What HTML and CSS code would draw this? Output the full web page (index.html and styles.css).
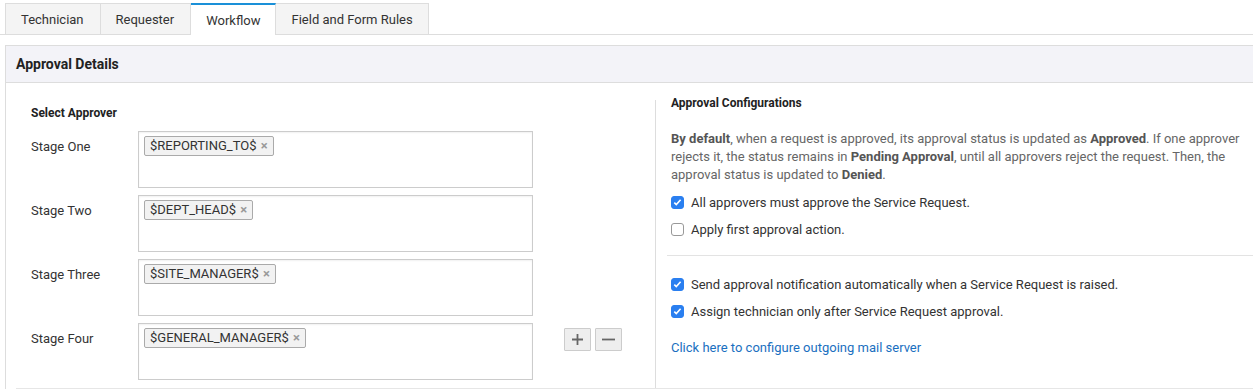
FILE: index.html
```html
<!DOCTYPE html>
<html lang="en">
<head>
  <meta charset="UTF-8">
  <title>Workflow - Approval Details</title>
  <link rel="stylesheet" href="styles.css">
</head>
<body>
  <div class="tabs">
    <div class="tab wide">Technician</div>
    <div class="tab wide">Requester</div>
    <div class="tab active">Workflow</div>
    <div class="tab">Field and Form Rules</div>
  </div>

  <div class="panel">
    <div class="panel-head">Approval Details</div>
    <div class="panel-body">
      <!-- left: approver stages -->
      <div class="approvers">
        <h3>Select Approver</h3>
        <div class="stage">
          <label>Stage One</label>
          <div class="picker"><span class="tag">$REPORTING_TO$ <i>&times;</i></span></div>
        </div>
        <div class="stage">
          <label>Stage Two</label>
          <div class="picker"><span class="tag">$DEPT_HEAD$ <i>&times;</i></span></div>
        </div>
        <div class="stage">
          <label>Stage Three</label>
          <div class="picker"><span class="tag">$SITE_MANAGER$ <i>&times;</i></span></div>
        </div>
        <div class="stage">
          <label>Stage Four</label>
          <div class="picker"><span class="tag">$GENERAL_MANAGER$ <i>&times;</i></span></div>
          <div class="stage-btns">
            <button class="sq">
              <svg width="13" height="13" viewBox="0 0 13 13"><path d="M6.5 1v11M1 6.5h11" stroke="#666" stroke-width="1.8"/></svg>
            </button>
            <button class="sq">
              <svg width="15" height="13" viewBox="0 0 15 13"><path d="M1 6.5h13" stroke="#666" stroke-width="1.8"/></svg>
            </button>
          </div>
        </div>
      </div>

      <!-- right: configuration -->
      <div class="config">
        <h3>Approval Configurations</h3>
        <p class="note"><b>By default</b>, when a request is approved, its approval status is updated as <b>Approved</b>. If one approver rejects it, the status remains in <b>Pending Approval</b>, until all approvers reject the request. Then, the approval status is updated to <b>Denied</b>.</p>
        <div class="opt"><span class="cb on"></span>All approvers must approve the Service Request.</div>
        <div class="opt"><span class="cb"></span>Apply first approval action.</div>
        <hr>
        <div class="opt"><span class="cb on"></span>Send approval notification automatically when a Service Request is raised.</div>
        <div class="opt"><span class="cb on"></span>Assign technician only after Service Request approval.</div>
        <a class="mail-link" href="#">Click here to configure outgoing mail server</a>
      </div>
    </div>
  </div>
</body>
</html>
```

FILE: styles.css
```css
body {
  margin: 0;
  font-family: Roboto, "Liberation Sans", sans-serif;
  font-size: 13px;
  color: #333;
  background: #fff;
  overflow: hidden;
}

/* tabs */
.tabs {
  display: flex;
  margin-top: 3px;
  padding-left: 5px;
  border-bottom: 1px solid #ddd;
  height: 31px;
}

.tab {
  box-sizing: border-box;
  height: 31px;
  padding: 1px 15px 0;
  line-height: 30px;
  font-size: 13px;
  color: #333;
  background: #f4f4f4;
  border: 1px solid #ddd;
  border-bottom: none;
  border-left: none;
}

.tab.wide {
  padding-right: 16px;
}

.tab:first-child {
  border-left: 1px solid #ddd;
}

.tab.active {
  background: #fff;
  border-top: 2px solid #1a90d8;
  height: 32px;
  padding-top: 1px;
  margin-bottom: -1px;
}

/* panel */
.panel {
  margin: 10px 0 0 5px;
  border-left: 1px solid #ddd;
  border-top: 1px solid #ddd;
}

.panel-head {
  height: 36px;
  line-height: 37px;
  padding-left: 10px;
  background: #f3f3f8;
  border-bottom: 1px solid #ddd;
  font-size: 14px;
  font-weight: bold;
  color: #222;
}

.panel-body {
  display: grid;
  grid-template-columns: 639px 1fr;
  margin-left: 10px;
  border-bottom: 1px solid #e6e6e6;
  height: 305px;
}

h3 {
  margin: 0;
  font-size: 12px;
  font-weight: bold;
  color: #222;
}

/* approvers */
.approvers {
  padding: 22px 0 0 15px;
}

.approvers h3 {
  padding-top: 1px;
  margin-bottom: 11px;
}

.stage {
  display: flex;
  align-items: flex-start;
  margin-bottom: 7px;
}

.stage label {
  width: 107px;
  padding-top: 8px;
  color: #333;
}

.picker {
  box-sizing: border-box;
  width: 395px;
  height: 57px;
  border: 1px solid #ccc;
  box-shadow: inset 0 1px 2px rgba(0, 0, 0, 0.06);
  padding: 4px 5px;
}

.tag {
  display: inline-block;
  height: 20px;
  line-height: 18px;
  padding: 0 5px 0 5px;
  box-sizing: border-box;
  border: 1px solid #aaa;
  border-radius: 2px;
  background: #f2f2f2;
  font-size: 13px;
  color: #333;
}

.tag i {
  font-style: normal;
  font-weight: bold;
  color: #999;
  font-size: 13px;
  margin-left: 1px;
}

.stage-btns {
  display: flex;
  gap: 4px;
  margin: 5px 0 0 31px;
}

.sq {
  box-sizing: border-box;
  width: 27px;
  height: 23px;
  padding: 0;
  display: flex;
  align-items: center;
  justify-content: center;
  background: #eee;
  border: 1px solid #ccc;
  border-radius: 1px;
}

/* config */
.config {
  margin-top: 17px;
  border-left: 1px solid #ddd;
  padding-left: 15px;
}

.config h3 {
  margin-top: -4px;
}

.note {
  margin: 20px 0 5px;
  line-height: 18px;
  color: #666;
}

.note b {
  color: #555;
}

.opt {
  display: flex;
  align-items: center;
  height: 27px;
  color: #333;
}

.cb {
  box-sizing: border-box;
  width: 13px;
  height: 13px;
  margin-right: 7px;
  border: 1px solid #999;
  border-radius: 3px;
  background: #fff;
}

.cb.on {
  border-color: #2a7ff0;
  background: #2a7ff0 url("data:image/svg+xml;utf8,<svg xmlns='http://www.w3.org/2000/svg' width='13' height='13' viewBox='0 0 13 13'><path d='M3.3 6.6l2 2 4.3-4.8' fill='none' stroke='white' stroke-width='1.6'/></svg>") center / 13px no-repeat;
}

.config hr {
  margin: 12px 0 15px -4px;
  border: none;
  border-top: 1px solid #e3e3e3;
}

.mail-link {
  display: block;
  margin-top: 15px;
  color: #1a6fc0;
  text-decoration: none;
}
```
